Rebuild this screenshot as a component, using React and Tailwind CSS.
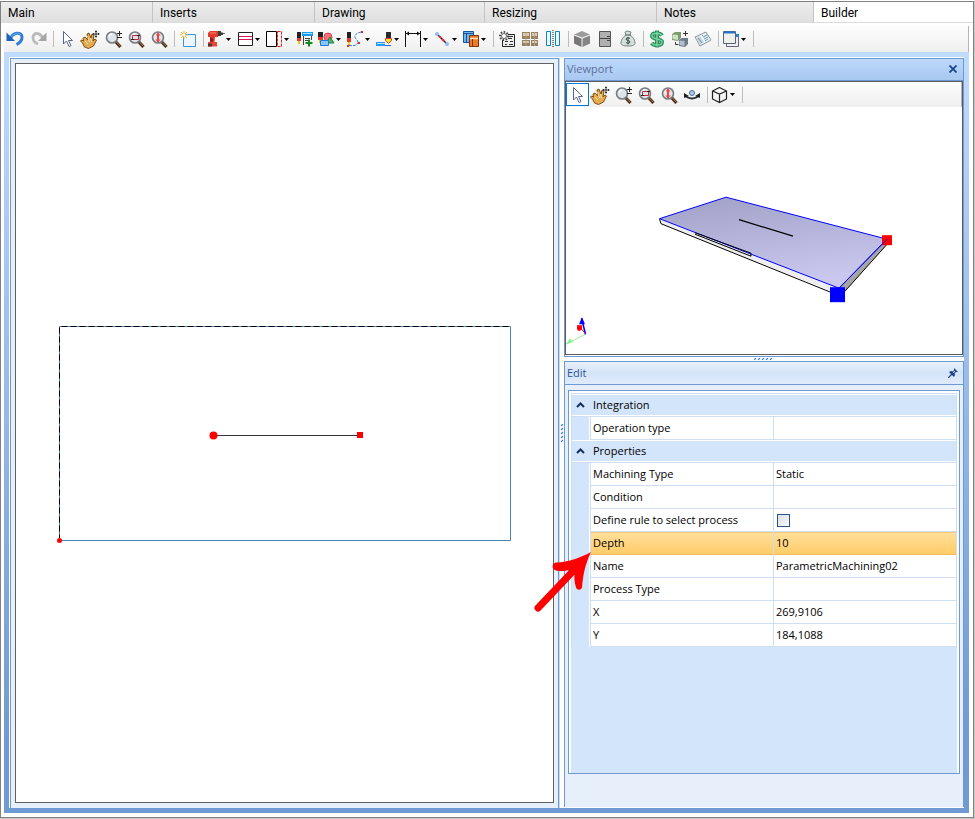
import React, { useState } from 'react';

const TABS = [
  { label: 'Main', width: 'w-[152px]' },
  { label: 'Inserts', width: 'w-[162px]' },
  { label: 'Drawing', width: 'w-[170px]' },
  { label: 'Resizing', width: 'w-[172px]' },
  { label: 'Notes', width: 'w-[157px]' },
  { label: 'Builder', width: 'flex-1' },
];

// ── Icon drawings, all on a 20 x 20 grid ──
function Magnifier({ children }) {
  return (
    <>
      <path d="M12.500 12.500l5 5.500" stroke="#4a2c1c" strokeWidth="3.200" />
      <path d="M13.500 13l4 4.500" stroke="#b0804f" strokeWidth="1" />
      <circle cx="9" cy="8.500" r="5.500" fill="#dde5ea" stroke="#777c80" strokeWidth="1.600" />
      <path d="M6 7.500a3.500 3.500 0 0 1 3-2.500" stroke="#fff" strokeWidth="1.500" fill="none" />
      {children}
    </>
  );
}

const ICONS = {
  undo: (
    <>
      <path d="M5.500 9.500C8 3 17 2.500 17 8c0 4-2 6-5.500 7.500" fill="none" stroke="#2f7fd6" strokeWidth="3" />
      <path d="M6 8.500C9 4 14 3 15.500 6" fill="none" stroke="#6bb0f0" />
      <path d="M1.500 3.500V12h8.500z" fill="#1d62bd" />
    </>
  ),
  redo: (
    <>
      <path d="M15 9.500C12 3 5 3 5 8.500c0 4 2 5.500 5 6.500" fill="none" stroke="#bbb" strokeWidth="2.800" />
      <path d="M18.500 3.500V12H10z" fill="#a5a5a5" />
    </>
  ),
  cursor: <path d="M6.500 2.500v12.500l3-3 2.500 5.500 2-1-2.500-5h4z" fill="#fff" stroke="#56688c" />,
  hand: (
    <>
      <path d="M3 9l2-1 3 3-1-6 2-1 2 5 1-4 2 1-1 6 2-2 1.500 1-3 6-5 2.500-4-1.500-2-4-2-2 1-1 2 1z" fill="#e3ab50" stroke="#7d4d15" />
      <path d="M7.500 7l2 6M10.500 9l1 4M5 12l3 3" stroke="#fbe3b0" />
      <path d="M16 1.500v7M12.500 5h7M15 2.500h2M15 7.500h2M13.500 4v2M18.500 4v2" stroke="#333" />
    </>
  ),
  zoomInOut: (
    <Magnifier>
      <path d="M16.500 2v5M14 4.500h5M14 8.500h5" stroke="#222" />
    </Magnifier>
  ),
  zoomWindow: (
    <Magnifier>
      <path d="M6.500 6.500h6v4h-6z" fill="none" stroke="#c02a38" />
      <path d="M5 10.500h3M11 6.500h3" stroke="#222" />
    </Magnifier>
  ),
  zoomExtents: (
    <Magnifier>
      <path d="M9 4v9" stroke="#f04444" strokeWidth="2" />
      <path d="M6.500 6.500l2.500-3 2.500 3zM6.500 10.500l2.500 3 2.500-3z" fill="#f04444" />
    </Magnifier>
  ),
  newItem: (
    <>
      <path d="M5.500 5.500h12v12h-12z" fill="#edf6ff" stroke="#3c94df" />
      <path d="M6 2v8M2 6h8M3 3l6 6M9 3L3 9" stroke="#efc22a" />
      <circle cx="6" cy="6" r="1.500" fill="#fff" />
    </>
  ),
  drill: (
    <>
      <path d="M2 4l2-2h8v6H9l-.5 5H4V8H2z" fill="#e23a2c" />
      <path d="M12 2h3v1.500h2V6h-2v1h-3z" fill="#3c3c3c" />
      <path d="M17 4h2v1h-2z" fill="#666" />
      <path d="M4 8l3.500 2-1 3.500H4z" fill="#8f1d17" />
      <path d="M2 13h9v4.500H2z" fill="#e5483b" />
      <path d="M2 14.500h4v3H2z" fill="#5a3230" />
      <path d="M4 4h6" stroke="#ff8a7a" />
    </>
  ),
  rows: (
    <>
      <path d="M3.500 3.500h14v13h-14z" fill="#fff" stroke="#222" />
      <path d="M4 7.500h13M4 10.500h13" stroke="#dc1459" />
    </>
  ),
  edge: (
    <>
      <path d="M2.500 2.500h10v15h-10z" fill="#fff" stroke="#000" />
      <path d="M13.500 2.500h4v15h-4z" fill="none" stroke="#e61c1c" strokeDasharray="3 1" />
    </>
  ),
  toolAdd: (
    <>
      <path d="M3 3h4v6H3z" fill="#222" />
      <path d="M3 9h4v3H3z" fill="#e33b2c" />
      <path d="M4 12h2v3H4z" fill="#f2c40e" />
      <path d="M8 3h11v4H8z" fill="#1e9bf0" />
      <path d="M9 4.500h9" stroke="#9de4ff" />
      <path d="M9.500 7v9M17.500 7v4M11 9.500h5M11 11.500h3" stroke="#444" />
      <path d="M15 10.500v7M11.500 14h7" stroke="#158a1c" strokeWidth="2" />
    </>
  ),
  toolShapes: (
    <>
      <path d="M2 3h5v5H2z" fill="#222" />
      <path d="M2 8h5v3H2z" fill="#e33b2c" />
      <path d="M3 11h2v3H3z" fill="#f2c40e" />
      <circle cx="12" cy="8" r="4" fill="#f4717b" stroke="#e13a4b" />
      <path d="M10 14h8l-4-6z" fill="#4fb560" stroke="#218538" />
      <path d="M4.500 11.500h8v5h-8z" fill="#8ac5fb" stroke="#2379d8" />
    </>
  ),
  toolPath: (
    <>
      <path d="M2 3h4v6H2z" fill="#222" />
      <path d="M2 9h4v4H2z" fill="#e33b2c" />
      <path d="M3 13h2v3H3z" fill="#f2c40e" />
      <path d="M4 16.500h6l3-2.500M13 13.500c0-3-4-4-3-7 1-2 4-3 6-3.500" fill="none" stroke="#2c83e0" strokeDasharray="3 1" />
      <path d="M2 16h2v2H2zM16 2h2v2h-2zM13 13h2v2h-2z" fill="#ea2525" />
    </>
  ),
  toolEdge: (
    <>
      <path d="M12 3h5v6h-5z" fill="#2a2a2a" />
      <path d="M11.500 9.500h6v2l-3 3-3-3z" fill="#ffe626" stroke="#e2382c" />
      <path d="M2 13h9v4H2z" fill="#259cf2" />
      <path d="M3 14.500h8" stroke="#a6e2ff" />
      <path d="M11 16.500h6" stroke="#246ac9" />
    </>
  ),
  dimension: (
    <>
      <path d="M2.500 2v16M17.500 2v16M3 4.500h14" stroke="#111" />
      <path d="M3 4.500l3-2v4zM17 4.500l-3-2v4z" fill="#111" />
    </>
  ),
  segment: (
    <>
      <path d="M5 5l10 10" stroke="#222" strokeWidth="1.300" />
      <path d="M7 7l6 6" stroke="#e52b35" strokeWidth="2" strokeDasharray="3 1" />
      <circle cx="5" cy="5" r="2" fill="#8ebcf0" />
      <circle cx="15" cy="15" r="2" fill="#8ebcf0" />
    </>
  ),
  copyPanel: (
    <>
      <path d="M2.500 2.500h10v11h-10z" fill="#6fb4ea" stroke="#16549c" />
      <path d="M3 4.500h9M5.500 5v8" stroke="#16549c" />
      <path d="M8.500 6.500h9v11h-9z" fill="#ef7b22" stroke="#7a3610" />
      <path d="M9 9.500h8" stroke="#ffe0c0" strokeWidth="1.500" />
      <path d="M11.500 10v7" stroke="#7a3610" />
    </>
  ),
  gearDoc: (
    <>
      <path d="M5.500 5.500h12v12h-12z" fill="#eee" stroke="#222" />
      <path d="M12 7.500h4M11 9.500h4M8 12.500h3M13 12.500h3M8 15.500h2M12 15.500h4" stroke="#333" />
      <circle cx="7" cy="7" r="4" fill="#f5f5f5" stroke="#444" strokeWidth="2" strokeDasharray="1.500 1.500" />
      <circle cx="7" cy="7" r="2.500" fill="#fff" stroke="#666" />
    </>
  ),
  tiles: (
    <>
      <path d="M2 3h8v7H2zM11 3h7v7h-7zM2 11h8v6H2zM11 11h7v6h-7z" fill="#96805f" />
      <path d="M3 4h6v3H3zM12 4h5v3h-5zM3 12h6v2H3zM12 12h5v2h-5z" fill="#ddcfb7" />
      <path d="M6 3v14M14.500 3v14" stroke="#b5a286" />
    </>
  ),
  mirror: (
    <>
      <path d="M3.500 2.500h4v14h-4zM12.500 2.500h4v14h-4z" fill="#eaf8ff" stroke="#1282bd" />
      <path d="M10 1v17" stroke="#111" strokeDasharray="1 1" />
    </>
  ),
  cube: (
    <>
      <path d="M10 2l8 3.500-8 3-8-3z" fill="#9b9b9b" />
      <path d="M2 6.500l7.500 3v8.500L2 14.500z" fill="#777" />
      <path d="M18 6.500l-7.500 3v8.500l7.500-3.500z" fill="#858585" />
    </>
  ),
  cabinet: (
    <>
      <path d="M4.500 2.500h11v15h-11z" fill="#b0b0b0" stroke="#555" />
      <path d="M5 9.500h10M12 7.500h3M12 11.500h3" stroke="#444" />
    </>
  ),
  moneyBag: (
    <>
      <path d="M7 3l2-1 4 1-1 3c3 2 5 5 5 8 0 2-2 3-7 3s-7-1-7-3c0-3 2-6 5-8z" fill="#d5dfdc" stroke="#73827e" />
      <path d="M7 6h6" stroke="#73827e" strokeWidth="1.500" />
      <path d="M12 9.500c-1-1-4-1-4 .5 0 2 4 1 4 3 0 1.500-3 1.500-4 .5M10 8v7.500" fill="none" stroke="#334d45" />
    </>
  ),
  dollar: (
    <>
      <path d="M15 6.500C13 3.500 5 3 5 7c0 4 10 2 10 6 0 4-8 4-10.500 1M10 1.500v17" fill="none" stroke="#258f5a" strokeWidth="4" />
      <path d="M15 6.500C13 3.500 5 3 5 7c0 4 10 2 10 6 0 4-8 4-10.500 1M10 2.500v15" fill="none" stroke="#7ed3a1" strokeWidth="1.500" />
    </>
  ),
  cubesSwap: (
    <>
      <path d="M2 5l3-2h6v6l-3 3-6-1z" fill="#7d9c6c" />
      <path d="M2.500 5.500l5.500.5v5l-5.500-1z" fill="#cfe2c3" />
      <path d="M9 11l3-2h6v6l-3 3-6-1z" fill="#6d7b88" />
      <path d="M9.500 11.500l5 .5v5l-5-1z" fill="#b3c0cb" />
      <path d="M15.500 2v5M13 4.500h5M5.500 13v2.500h3" fill="none" stroke="#333" />
    </>
  ),
  card: (
    <>
      <path d="M2 8l11-5 5 8-11 6z" fill="#eef3f6" stroke="#8b9499" />
      <path d="M3 9l4-2 4 6-4 3z" fill="#c8d7df" />
      <path d="M9 6l1 1M10 8l4-2M11 10l4-2M12 12l3-2M5 9l4 5" stroke="#5b94bd" />
    </>
  ),
  windows: (
    <>
      <path d="M5.500 5.500h12v12h-12z" fill="#efefef" stroke="#667" />
      <path d="M5 5h13v3H5z" fill="#2f7bd0" />
      <path d="M2.500 2.500h12v12h-12z" fill="#efefec" stroke="#586474" />
      <path d="M3 3.500h11" stroke="#2474cf" strokeWidth="2" />
    </>
  ),
  orbit: (
    <>
      <path d="M3 10c3 4.500 11 4.500 14 0" fill="none" stroke="#2d3338" strokeWidth="2" />
      <path d="M2 13V8l5 3zM18 13V8l-5 3z" fill="#222" />
      <circle cx="10" cy="8" r="2.500" fill="#a8cff0" stroke="#4c6b8d" />
    </>
  ),
  wireCube: <path d="M9.500 2.500l7 3.500v8l-7 3.500-7-3.500V6zM2.500 6l7 3 7-3M9.500 9v8.500" fill="none" stroke="#222" strokeWidth="1.200" />,
};

const MAIN_TOOLS = [
  ['undo', 'Undo'], ['redo', 'Redo'], null,
  ['cursor', 'Select'], ['hand', 'Pan'], ['zoomInOut', 'Zoom'], ['zoomWindow', 'Zoom window'], ['zoomExtents', 'Zoom extents'], null,
  ['newItem', 'New'], null,
  ['drill', 'Drilling', true], ['rows', 'Slots', true], ['edge', 'Edge', true], ['toolAdd', 'Add tool'],
  ['toolShapes', 'Shapes', true], ['toolPath', 'Path', true], ['toolEdge', 'Profile', true],
  ['dimension', 'Dimension', true], ['segment', 'Segment', true], ['copyPanel', 'Panels', true], null,
  ['gearDoc', 'Settings'], ['tiles', 'Tiles'], ['mirror', 'Mirror'], null,
  ['cube', 'Box'], ['cabinet', 'Cabinet'], ['moneyBag', 'Cost'], null,
  ['dollar', 'Price'], ['cubesSwap', 'Replace'], ['card', 'Report'], null,
  ['windows', 'Windows', true], null,
];

const VIEW_TOOLS = [
  ['cursor', 'Select view', false, true], ['hand', 'Pan view'], ['zoomInOut', 'Zoom view'],
  ['zoomWindow', 'Zoom view window'], ['zoomExtents', 'Zoom view extents'], ['orbit', 'Orbit'], null,
  ['wireCube', 'Display style', true], null,
];

function ToolBar({ label, tools, height }) {
  return (
    <div role="toolbar" aria-label={label}
      className={`flex shrink-0 items-center border-r border-[#b5b5b5] bg-linear-to-b from-[#fdfdfd] to-[#efefef] ${height}`}>
      {tools.map((tool, i) => {
        if (!tool) {
          return <span key={i} className="flex w-[6px] shrink-0 justify-center"><span className="h-4 w-px bg-[#bdbdbd]" /></span>;
        }
        const [icon, name, menu, active] = tool;
        return (
          <button key={i} type="button" aria-label={name}
            className={`flex h-[23px] shrink-0 items-center border ${menu ? 'w-[29px] border-x-0' : 'w-[23px]'} ${active ? 'border-[#0078d7] bg-white' : 'border-transparent'}`}>
            <svg viewBox="0 0 20 20" className="h-5 w-5 shrink-0" fill="none">{ICONS[icon]}</svg>
            {menu && <svg viewBox="0 0 5 3" className="h-[3px] w-[5px]"><path d="M0 0h5L2.500 3z" fill="#000" /></svg>}
          </button>
        );
      })}
    </div>
  );
}

// ── Left: 2D drawing of the part ──
function Drawing() {
  return (
    <div className="min-w-0 flex-1 border-x border-t border-[#6f99d3] bg-[#e7effa] px-1 pt-1 pb-[5px]">
      <div className="h-full overflow-hidden border border-[#606060] bg-white">
        <svg viewBox="0 0 537 738" className="h-full w-full">
          <path d="M43.500 262.500h451v214h-451z" fill="none" stroke="#4682b4" />
          <path d="M43.500 476.500v-214h451" fill="none" stroke="#000" strokeDasharray="6 3" />
          <path d="M197 371.500h147" stroke="#333" />
          <circle cx="197.500" cy="371.500" r="4" fill="#f00" />
          <path d="M341 368h6v6h-6z" fill="#f00" />
          <circle cx="43.500" cy="476.500" r="2.500" fill="#f00" />
        </svg>
      </div>
    </div>
  );
}

// ── Right top: 3D preview ──
function Viewport() {
  return (
    <section aria-label="Viewport" className="flex min-h-0 flex-[299] flex-col border border-[#6f99d3]">
      <header className="flex h-[22px] shrink-0 items-center justify-between border-b border-[#6f99d3] bg-linear-to-b from-[#bcd8fc] to-[#a9c8f0] pr-[2px] pb-px pl-[2px]">
        <h2 className="text-[11px] leading-4 text-[#5b6f97]">Viewport</h2>
        <button type="button" aria-label="Close" className="flex h-4 w-4 items-center justify-center">
          <svg viewBox="0 0 8 8" className="h-2 w-2"><path d="M0.500 0.500l7 7M7.500 0.500l-7 7" stroke="#15428b" strokeWidth="1.700" /></svg>
        </button>
      </header>
      <div className="mb-px flex min-h-0 flex-1 flex-col border border-[#5c5c5c] bg-white">
        <ToolBar label="View tools" tools={VIEW_TOOLS} height="h-[25px]" />
        <svg viewBox="0 0 396 247" className="min-h-0 w-full flex-1">
          <defs>
            <linearGradient id="top" x1="0" y1="0" x2="0.300" y2="1">
              <stop offset="0" stopColor="#a09fc6" />
              <stop offset="1" stopColor="#c9c7ee" />
            </linearGradient>
          </defs>
          <path d="M93.500 111.500l180 69.500-3 5L95 116.500z" fill="#eee" />
          <path d="M321 132l1 4-43 48-6-3z" fill="#a5a5a5" />
          <path d="M93.500 111.500L160 90l161 42-48 49z" fill="url(#top)" stroke="#00f" />
          <path d="M93.500 112l1.500 4.500 172 69.500M322 136l-43 48M129 125.500l56 20.500v3l-56-22" fill="none" stroke="#000" />
          <path d="M173 112.500l54 16.500" stroke="#000" strokeWidth="1.200" />
          <path d="M316 128h10v10h-10z" fill="#f00" />
          <path d="M321 132l-48 49" stroke="#00f" />
          <path d="M264 180h15v15h-15z" fill="#00f" />
          <path d="M19.500 227L0 237" stroke="#90ee90" />
          <path d="M0 237l4-6 3 4z" fill="#90ee90" />
          <path d="M19.500 227l-4-16" stroke="#00f" strokeWidth="1.500" />
          <path d="M16 210l3 7h-6z" fill="#00f" />
          <path d="M19 226l-7-8" stroke="#f00" />
          <path d="M11 218h5v4l-3 2-2-2z" fill="#f00" />
        </svg>
      </div>
    </section>
  );
}

function GroupRow({ children }) {
  return (
    <tr>
      <th colSpan="3" scope="colgroup"
        className="h-[23px] border-b border-[#cfdff3] bg-[#d3e5fb] p-0 text-left font-normal shadow-[inset_0_1px_0_#fff,inset_0_-1px_0_#fff]">
        <span className="flex items-center">
          <svg viewBox="0 0 21 8" className="h-2 w-[21px] shrink-0"><path d="M5 6l3.500-3.500L12 6" fill="none" stroke="#15305f" strokeWidth="2" /></svg>
          {children}
        </span>
      </th>
    </tr>
  );
}

function PointerArrow() {
  return (
    <svg viewBox="0 0 60 62" aria-hidden="true" className="pointer-events-none absolute top-[19px] right-full h-[62px] w-[60px]">
      <path d="M7 57L44 18" stroke="#f00" strokeWidth="7" strokeLinecap="round" />
      <path d="M60 1C49 7 38 11 25 11.500c-4 .5-5 6.500 0 8 6 1.500 12 0 19-2-1 7-1 13 1 19 1 3 5 3 6 0 1-12 3-23 9-35.500z" fill="#f00" />
    </svg>
  );
}

function PropertyRow({ name, value, selected, id, children }) {
  const cell = selected
    ? 'border-b border-[#f0b95c] bg-linear-to-b from-[#ffe09c] to-[#ffcc67] shadow-[inset_0_1px_0_#f5c878]'
    : 'border-b border-[#cfdff3] bg-white';
  return (
    <tr>
      <td className="border-r border-white bg-[#d3e5fb] p-0" />
      <th scope="row" className={`relative h-[23px] border-l border-l-[#cfdff3] p-0 pl-[2px] text-left font-normal ${cell}`}>
        {id ? <label htmlFor={id}>{name}</label> : name}
        {selected && <PointerArrow />}
      </th>
      <td className={`h-[23px] border-l border-l-[#cfdff3] p-0 pl-[2px] ${cell}`}>{children || value}</td>
    </tr>
  );
}

// ── Right bottom: property grid ──
function EditPanel() {
  const [rule, setRule] = useState(false);
  return (
    <section aria-label="Edit" className="flex min-h-0 flex-[447] flex-col border-x border-t border-[#6f99d3] bg-[#e7effa]">
      <header className="flex h-[23px] shrink-0 items-center justify-between border-b border-[#6f99d3] bg-linear-to-b from-[#e8f0fb] via-[#d4e4f7] to-[#e0ebfa] pr-[2px] pl-[2px]">
        <h2 className="text-[11px] leading-4 text-[#2e5499]">Edit</h2>
        <button type="button" aria-label="Pin" className="flex h-4 w-4 items-center justify-center">
          <svg viewBox="0 0 10 10" className="h-[10px] w-[10px]">
            <path d="M0 10l4-4" stroke="#15428b" strokeWidth="1.200" />
            <path d="M1 4l2-1 2 .5L6 2V0l4 4H8L6.500 5.500 7 7 6 9z" fill="#15428b" />
            <path d="M5 5L7 3" stroke="#dfeafa" />
          </svg>
        </button>
      </header>
      <div className="mx-[3px] mt-[5px] mb-[33px] min-h-0 flex-1 border border-[#6f99d3] bg-white px-[2px] pt-[2px]">
        <div className="h-full bg-[#d3e5fb]">
          <table className="w-full table-fixed border-separate border-spacing-0 border-t border-r border-l border-[#cfdff3] text-[11px] leading-4 text-black">
            <colgroup>
              <col className="w-[18px]" />
              <col className="w-[183px]" />
              <col />
            </colgroup>
            <tbody>
              <GroupRow>Integration</GroupRow>
              <PropertyRow name="Operation type" />
              <GroupRow>Properties</GroupRow>
              <PropertyRow name="Machining Type" value="Static" />
              <PropertyRow name="Condition" />
              <PropertyRow name="Define rule to select process" id="rule">
                <input id="rule" type="checkbox" checked={rule} onChange={(e) => setRule(e.target.checked)}
                  className="ml-px block h-[13px] w-[13px] appearance-none border border-[#2a5487] bg-linear-to-br from-[#dcdfe8] to-[#f8f8fa] checked:bg-[#2a5487]" />
              </PropertyRow>
              <PropertyRow name="Depth" value="10" selected />
              <PropertyRow name="Name" value="ParametricMachining02" />
              <PropertyRow name="Process Type" />
              <PropertyRow name="X" value="269,9106" />
              <PropertyRow name="Y" value="184,1088" />
            </tbody>
          </table>
        </div>
      </div>
    </section>
  );
}

export default function App() {
  const [tab, setTab] = useState('Builder');

  return (
    <div className="flex h-screen flex-col border-t border-r border-b border-t-white border-r-[#c8c8c8] border-b-[#c8c8c8] bg-white font-['Open_Sans',sans-serif]">
      <div className="flex min-h-0 flex-1 flex-col border border-[#808080]">
        <nav role="tablist" className="flex h-[21px] shrink-0">
          {TABS.map(({ label, width }) => (
            <button key={label} type="button" role="tab" aria-selected={tab === label} onClick={() => setTab(label)}
              className={`border-b border-[#dcdcdc] pt-px pl-[7px] text-left font-['Roboto',sans-serif] text-[12px] leading-5 text-black ${width} ${tab === label ? 'bg-white' : 'border-r border-r-[#c4c4c4] bg-linear-to-b from-[#ededed] to-[#dfdfdf]'}`}>
              {label}
            </button>
          ))}
        </nav>

        <div className="mt-[3px] mr-1 mb-1 ml-[3px] flex min-h-0 flex-1 flex-col">
          <ToolBar label="Builder tools" tools={MAIN_TOOLS} height="h-[26px]" />
          <main className="flex min-h-0 flex-1 bg-linear-to-b from-[#bfdbff] to-[#6f9ad3] to-90% pt-[5px] pr-[5px] pb-[5px] pl-[5px]">
            <div className="flex min-w-0 flex-1 bg-white pt-px pl-px">
              <Drawing />
              <div className="flex w-[5px] shrink-0 items-center border-l border-[#c3d9f5]">
                <svg viewBox="0 0 4 18" className="h-[18px] w-1">
                  <path d="M1 2l2-2M1 6l2-2M1 10l2-2M1 14l2-2M1 18l2-2" stroke="#3f7fd0" strokeWidth="1.200" />
                </svg>
              </div>
              <div className="flex w-[400px] shrink-0 flex-col pb-px">
                <Viewport />
                <div className="flex h-1 shrink-0 items-center justify-center">
                  <svg viewBox="0 0 20 2" className="h-[2px] w-5">
                    <path d="M0 2l2-2M4 2l2-2M8 2l2-2M12 2l2-2M16 2l2-2" stroke="#3f7fd0" strokeWidth="1.200" />
                  </svg>
                </div>
                <EditPanel />
              </div>
            </div>
          </main>
        </div>
      </div>
    </div>
  );
}
